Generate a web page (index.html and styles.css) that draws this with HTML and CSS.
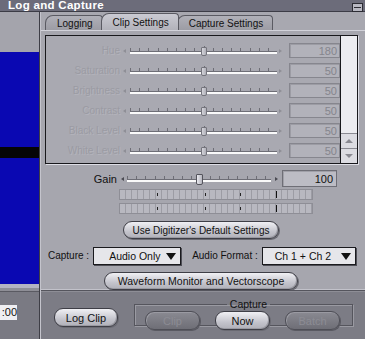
FILE: index.html
```html
<!DOCTYPE html>
<html lang="en">
<head>
    <meta charset="UTF-8">
    <meta name="viewport" content="width=device-width, initial-scale=1.0">
    <title>Log and Capture</title>
    <link rel="stylesheet" href="styles.css">
</head>
<body>
<div class="window">
    <div class="titlebar">
        <span class="title">Log and Capture</span>
        <span class="zoom-box"></span>
    </div>
    <div class="body">
        <div class="side">
            <div class="side-top"></div>
            <div class="video"><div class="video-bar"></div></div>
            <div class="side-strip"></div>
            <div class="side-bottom"><span class="timecode">:00</span></div>
        </div>
        <div class="main">
            <div class="tabs">
                <span class="tab">Logging</span>
                <span class="tab active">Clip Settings</span>
                <span class="tab">Capture Settings</span>
            </div>
            <div class="panel">
                <div class="image-box">
                    <div class="rows">
                        <div class="row"><span class="label">Hue</span><span class="end-l"></span><span class="slider"></span><span class="end-r"></span><span class="num">180</span></div>
                        <div class="row"><span class="label">Saturation</span><span class="end-l"></span><span class="slider"></span><span class="end-r"></span><span class="num">50</span></div>
                        <div class="row"><span class="label">Brightness</span><span class="end-l"></span><span class="slider"></span><span class="end-r"></span><span class="num">50</span></div>
                        <div class="row"><span class="label">Contrast</span><span class="end-l"></span><span class="slider"></span><span class="end-r"></span><span class="num">50</span></div>
                        <div class="row"><span class="label">Black Level</span><span class="end-l"></span><span class="slider"></span><span class="end-r"></span><span class="num">50</span></div>
                        <div class="row"><span class="label">White Level</span><span class="end-l"></span><span class="slider"></span><span class="end-r"></span><span class="num">50</span></div>
                    </div>
                    <div class="scrollbar">
                        <div class="track"></div>
                        <span class="arrow up"></span>
                        <span class="arrow down"></span>
                    </div>
                </div>

                <div class="gain-row">
                    <span class="gain-label">Gain</span>
                    <span class="end-l"></span>
                    <span class="slider gain"></span>
                    <span class="end-r"></span>
                    <span class="gain-value">100</span>
                </div>
                <div class="meter"></div>
                <div class="meter"></div>

                <button class="pill defaults">Use Digitizer's Default Settings</button>

                <div class="capture-row">
                    <span class="field-label">Capture :</span>
                    <span class="popup audio-only">Audio Only</span>
                    <span class="field-label">Audio Format :</span>
                    <span class="popup channels">Ch 1 + Ch 2</span>
                </div>

                <button class="pill waveform">Waveform Monitor and Vectorscope</button>
            </div>
            <div class="footer">
                <button class="pill log-clip">Log Clip</button>
                <fieldset class="capture-group">
                    <legend>Capture</legend>
                    <button class="pill small" disabled>Clip</button>
                    <button class="pill small">Now</button>
                    <button class="pill small" disabled>Batch</button>
                </fieldset>
            </div>
        </div>
    </div>
</div>
</body>
</html>
```

FILE: styles.css
```css
body {
    margin: 0;
    font-family: "Liberation Sans", Arial, sans-serif;
    font-size: 10px;
    color: #111;
    background: #a6a6ae;
}
.window {
    width: 365px;
    height: 339px;
    overflow: hidden;
    display: flex;
    flex-direction: column;
}
.titlebar {
    height: 11px;
    background: #6c6c7a;
    border-bottom: 1px solid #3c3c46;
    display: flex;
    align-items: center;
    justify-content: space-between;
    padding: 0 2px 0 8px;
}
.title {
    color: #fff;
    font-weight: bold;
    font-size: 11.5px;
    line-height: 11px;
    letter-spacing: 0.3px;
}
.zoom-box {
    width: 9px;
    height: 7px;
    margin-top: 4px;
    border: 1px solid #2c2c34;
    background: linear-gradient(#2c2c34, #2c2c34) 1px 3px / 7px 1px no-repeat, #b8b8c2;
}
.body {
    flex: 1;
    display: flex;
}

/* left video column */
.side {
    width: 39px;
    border-right: 1px solid #3e3e46;
    display: flex;
    flex-direction: column;
}
.side-top {
    height: 40px;
    background: #a4a4ac;
}
.video {
    height: 232px;
    background: #0a08b2;
    padding-top: 95px;
    box-sizing: border-box;
}
.video-bar {
    height: 11px;
    background: #050505;
}
.side-strip {
    height: 4px;
    background: #b4b4c2;
    border-bottom: 3px solid #8e8e96;
}
.side-bottom {
    flex: 1;
    background: #7a7a83;
    border-top: 1px solid #5a5a62;
    padding-top: 13px;
}
.timecode {
    display: inline-block;
    width: 17px;
    height: 15px;
    line-height: 15px;
    background: #eeeef2;
    font-size: 11px;
    text-align: right;
}

/* tabs */
.main {
    flex: 1;
    display: flex;
    flex-direction: column;
    border-left: 1px solid #c4c4cc;
}
.tabs {
    height: 18px;
    display: flex;
    align-items: flex-end;
    padding-left: 4px;
    border-bottom: 1px solid #d2d2da;
    background: #a8a8b0;
}
.tab {
    height: 14px;
    line-height: 15px;
    padding: 0 9px 0 11px;
    margin-right: -2px;
    border: 1px solid #5a5a62;
    border-bottom: none;
    border-radius: 8px 4px 0 0;
    background: linear-gradient(#b0b0b8, #9c9ca4);
}
.tab.active {
    height: 16px;
    line-height: 17px;
    background: linear-gradient(#cacad2, #b2b2ba);
    position: relative;
    z-index: 1;
}

/* clip settings panel */
.panel {
    height: 259px;
    padding: 4px 0 0 4px;
    box-sizing: border-box;
    border-bottom: 1px solid #c2c2ca;
}
.image-box {
    width: 311px;
    height: 127px;
    border: 1px solid #18181c;
    box-shadow: 1px 1px 0 #dedee6;
    display: flex;
    background: #a9a9b1;
}
.rows {
    flex: 1;
    padding-top: 7px;
    display: flex;
    flex-direction: column;
    gap: 5px;
}
.row {
    height: 15px;
    display: flex;
    align-items: center;
}
.label {
    width: 74px;
    text-align: right;
    color: #9b9ba3;
    text-shadow: 1px 1px 0 #b4b4bc;
    font-size: 10px;
}
.end-l, .end-r {
    width: 0;
    height: 0;
    border-top: 2px solid transparent;
    border-bottom: 2px solid transparent;
}
.end-l {
    margin: 0 4px 0 3px;
    border-right: 3px solid #8e8e96;
}
.end-r {
    margin: 0 0 0 2px;
    border-left: 3px solid #8e8e96;
}
.slider {
    position: relative;
    width: 147px;
    height: 9px;
    background:
        repeating-linear-gradient(to right, #6e6e76 0 1px, transparent 1px 9.2px) 0 2px / 100% 3px no-repeat,
        linear-gradient(#6e6e76, #6e6e76) 0 5px / 100% 1px no-repeat,
        linear-gradient(#fafafa, #fafafa) 0 6px / 100% 2px no-repeat;
}
.slider::before {
    content: "";
    position: absolute;
    left: 50%;
    top: 0;
    width: 1px;
    height: 5px;
    background: #6e6e76;
}
.slider::after {
    content: "";
    position: absolute;
    left: calc(50% - 3px);
    top: 1px;
    width: 4px;
    height: 7px;
    border: 1px solid #74747c;
    border-radius: 1px 1px 2px 2px;
    background: linear-gradient(to right, #d4d4da, #b0b0b8);
}
.num {
    width: 47px;
    height: 13px;
    margin-left: 7px;
    line-height: 14px;
    padding-right: 2px;
    text-align: right;
    font-size: 11px;
    color: #85858d;
    background: #b2b2ba;
    border: 1px solid #86868e;
    box-shadow: inset 1px 1px 0 #9c9ca4;
}
.scrollbar {
    width: 16px;
    border-left: 1px solid #18181c;
    background: #ececf0;
    display: flex;
    flex-direction: column;
}
.track {
    flex: 1;
}
.arrow {
    height: 14px;
    border-top: 1px solid #8a8a92;
    background: #dcdce2;
    display: flex;
    align-items: center;
    justify-content: center;
}
.arrow::before {
    content: "";
    border-left: 4px solid transparent;
    border-right: 4px solid transparent;
}
.arrow.up::before {
    border-bottom: 4px solid #8a8a92;
}
.arrow.down::before {
    border-top: 4px solid #8a8a92;
}

/* gain and meters */
.gain-row {
    height: 17px;
    margin-top: 6px;
    display: flex;
    align-items: center;
}
.gain-label {
    width: 72px;
    text-align: right;
    font-size: 11px;
}
.gain-row .end-l {
    margin: 0 3px 0 4px;
    border-right-color: #4a4a52;
}
.gain-row .end-r {
    margin-left: 4px;
    border-left-color: #4a4a52;
}
.slider.gain {
    width: 144px;
}
.slider.gain::after {
    top: 0;
    width: 5px;
    height: 9px;
    border-color: #54545c;
    background: linear-gradient(to right, #e8e8ee, #b4b4bc);
}
.gain-value {
    width: 50px;
    height: 15px;
    margin-left: 4px;
    padding-right: 3px;
    line-height: 16px;
    text-align: right;
    font-size: 11px;
    background: #bcbcc4;
    border: 1px solid #6e6e76;
    box-shadow: inset 1px 1px 0 #a0a0a8;
}
.meter {
    width: 192px;
    height: 9px;
    margin: 2px 0 0 74px;
    border: 1px solid #8e8e96;
    background:
        linear-gradient(#222, #222) 37px 3px / 1px 3px no-repeat,
        linear-gradient(#222, #222) 85px 3px / 1px 3px no-repeat,
        linear-gradient(#222, #222) 120px 3px / 1px 3px no-repeat,
        linear-gradient(#111, #111) 156px 1px / 1px 7px no-repeat,
        repeating-linear-gradient(to right, #b8b8c0 0 5px, #9c9ca4 5px 6px);
}
.meter + .meter {
    margin-top: 3px;
}

/* buttons and popups */
.pill {
    font-family: inherit;
    font-size: 10px;
    color: #111;
    height: 18px;
    padding: 0;
    border: 1px solid #3e3e46;
    border-radius: 9px;
    background: linear-gradient(#f0f0f4, #c4c4cc 60%, #b0b0b8);
    box-shadow: 1px 1px 0 #6a6a72, inset -1px -1px 0 #9a9aa2;
}
.defaults {
    display: block;
    width: 156px;
    margin: 7px 0 0 78px;
}
.capture-row {
    height: 19px;
    margin-top: 7px;
    display: flex;
    align-items: center;
}
.field-label {
    font-size: 10px;
    margin-left: 3px;
}
.popup {
    height: 18px;
    line-height: 17px;
    margin-left: 4px;
    border: 1px solid #1a1a1e;
    background: #e6e6ea;
    box-shadow: 1px 1px 0 #4e4e56;
    box-sizing: border-box;
    position: relative;
    font-size: 10.5px;
}
.popup::after {
    content: "";
    position: absolute;
    right: 4px;
    top: 5px;
    border-left: 5px solid transparent;
    border-right: 5px solid transparent;
    border-top: 7px solid #111;
}
.audio-only {
    width: 88px;
    padding-left: 15px;
    margin-right: 8px;
}
.channels {
    width: 94px;
    padding-left: 12px;
}
.waveform {
    display: block;
    width: 194px;
    margin: 7px 0 0 59px;
    font-size: 10.5px;
}

/* footer */
.footer {
    flex: 1;
    background: #7c7c85;
    border-top: 1px solid #55555d;
    box-shadow: inset 0 1px 0 #8e8e96;
    display: flex;
    align-items: flex-start;
}
.log-clip {
    width: 64px;
    height: 19px;
    margin: 17px 0 0 13px;
    font-size: 11px;
}
.capture-group {
    width: 207px;
    height: 24px;
    margin: 9px 0 0 16px;
    padding: 0 0 0 10px;
    border: 1px solid #55555d;
    box-shadow: 1px 1px 0 #9a9aa2, inset 1px 1px 0 #9a9aa2;
    display: flex;
    gap: 15px;
    align-items: flex-start;
}
.capture-group legend {
    margin: 0 auto;
    padding: 0 3px;
    font-size: 10.5px;
    line-height: 9px;
}
.small {
    width: 55px;
    height: 19px;
    margin-top: 2px;
    font-size: 11px;
}
.pill:disabled {
    color: #8c8c94;
    border-color: #4e4e56;
    background: linear-gradient(#8a8a92, #6e6e76);
    box-shadow: 1px 1px 0 #5a5a62, inset 1px 1px 0 #9a9aa2;
}
```
